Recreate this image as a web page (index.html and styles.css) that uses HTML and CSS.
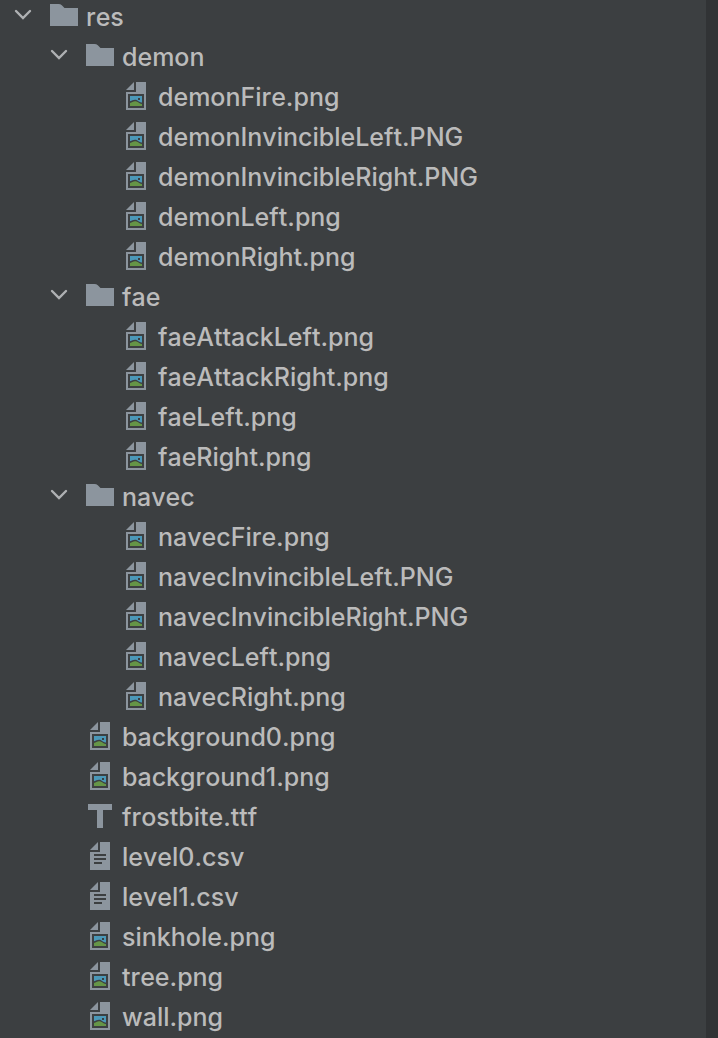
FILE: index.html
```html
<!DOCTYPE html>
<html lang="en">
<head>
<meta charset="utf-8">
<title>res</title>
<link rel="stylesheet" href="styles.css">
</head>
<body>
<svg class="sprite" aria-hidden="true">
  <symbol id="chevron" viewBox="0 0 32 32"><path d="M8 11l7 7 7-7" fill="none" stroke="#afb1b3" stroke-width="2.4" stroke-linecap="round"/></symbol>
  <symbol id="folder" viewBox="0 0 32 32"><path d="M2 4h8.500q2 0 3.300 1.300L16.500 8H30v18H2z" fill="#8c959e"/></symbol>
  <symbol id="image" viewBox="0 0 32 32">
    <path d="M14 2v8H6zM16 2h10v28H6V12h10zM8 14v14h16V14z" fill="#8c959e" fill-rule="evenodd"/>
    <path d="M10 16h12v6.500c-3 0-4-2.800-7-2.800-2 0-3 1-5 1.600z" fill="#4b98b8"/>
    <path d="M18 18h2v2h-2z" fill="#3c3f41"/>
    <path d="M10 23c2-.5 3-1.700 5-1.700 3 0 4 2.700 7 2.700v2H10z" fill="#659547"/>
  </symbol>
  <symbol id="text" viewBox="0 0 32 32"><path d="M14 2v8H6zM16 2h10v28H6V12h10zM10 14v2h12v-2zM10 18v2h12v-2zM10 22v2h8v-2z" fill="#8c959e" fill-rule="evenodd"/></symbol>
  <symbol id="font" viewBox="0 0 32 32"><path d="M4 4h24v6h-9v18h-6V10H4z" fill="#8c959e"/></symbol>
</svg>
<main class="panel">
  <ul class="tree">
    <li>
      <div class="row"><button class="toggle" aria-label="Toggle res" aria-expanded="true"><svg class="icon"><use href="#chevron"/></svg></button><svg class="icon"><use href="#folder"/></svg><span class="name">res</span></div>
      <ul class="branch">
        <li>
          <div class="row"><button class="toggle" aria-label="Toggle demon" aria-expanded="true"><svg class="icon"><use href="#chevron"/></svg></button><svg class="icon"><use href="#folder"/></svg><span class="name">demon</span></div>
          <ul class="branch">
            <li class="row file"><svg class="icon"><use href="#image"/></svg><span class="name">demonFire.png</span></li>
            <li class="row file"><svg class="icon"><use href="#image"/></svg><span class="name">demonInvincibleLeft.PNG</span></li>
            <li class="row file"><svg class="icon"><use href="#image"/></svg><span class="name">demonInvincibleRight.PNG</span></li>
            <li class="row file"><svg class="icon"><use href="#image"/></svg><span class="name">demonLeft.png</span></li>
            <li class="row file"><svg class="icon"><use href="#image"/></svg><span class="name">demonRight.png</span></li>
          </ul>
        </li>
        <li>
          <div class="row"><button class="toggle" aria-label="Toggle fae" aria-expanded="true"><svg class="icon"><use href="#chevron"/></svg></button><svg class="icon"><use href="#folder"/></svg><span class="name">fae</span></div>
          <ul class="branch">
            <li class="row file"><svg class="icon"><use href="#image"/></svg><span class="name">faeAttackLeft.png</span></li>
            <li class="row file"><svg class="icon"><use href="#image"/></svg><span class="name">faeAttackRight.png</span></li>
            <li class="row file"><svg class="icon"><use href="#image"/></svg><span class="name">faeLeft.png</span></li>
            <li class="row file"><svg class="icon"><use href="#image"/></svg><span class="name">faeRight.png</span></li>
          </ul>
        </li>
        <li>
          <div class="row"><button class="toggle" aria-label="Toggle navec" aria-expanded="true"><svg class="icon"><use href="#chevron"/></svg></button><svg class="icon"><use href="#folder"/></svg><span class="name">navec</span></div>
          <ul class="branch">
            <li class="row file"><svg class="icon"><use href="#image"/></svg><span class="name">navecFire.png</span></li>
            <li class="row file"><svg class="icon"><use href="#image"/></svg><span class="name">navecInvincibleLeft.PNG</span></li>
            <li class="row file"><svg class="icon"><use href="#image"/></svg><span class="name">navecInvincibleRight.PNG</span></li>
            <li class="row file"><svg class="icon"><use href="#image"/></svg><span class="name">navecLeft.png</span></li>
            <li class="row file"><svg class="icon"><use href="#image"/></svg><span class="name">navecRight.png</span></li>
          </ul>
        </li>
        <li class="row file"><svg class="icon"><use href="#image"/></svg><span class="name">background0.png</span></li>
        <li class="row file"><svg class="icon"><use href="#image"/></svg><span class="name">background1.png</span></li>
        <li class="row file"><svg class="icon"><use href="#font"/></svg><span class="name">frostbite.ttf</span></li>
        <li class="row file"><svg class="icon"><use href="#text"/></svg><span class="name">level0.csv</span></li>
        <li class="row file"><svg class="icon"><use href="#text"/></svg><span class="name">level1.csv</span></li>
        <li class="row file"><svg class="icon"><use href="#image"/></svg><span class="name">sinkhole.png</span></li>
        <li class="row file"><svg class="icon"><use href="#image"/></svg><span class="name">tree.png</span></li>
        <li class="row file"><svg class="icon"><use href="#image"/></svg><span class="name">wall.png</span></li>
      </ul>
    </li>
  </ul>
  <div class="gutter"></div>
</main>
<script src="tree.js"></script>
</body>
</html>
```
FILE: styles.css
```css
* {
  box-sizing: border-box;
}

body {
  margin: 0;
  background: #3c3f41;
  color: #bbbbbb;
  font: 500 25px/32px Inter, "Liberation Sans", sans-serif;
  font-kerning: none;
  font-variant-ligatures: none;
}

.sprite {
  display: none;
}

.panel {
  display: flex;
  min-height: 100vh;
}

.tree,
.branch {
  margin: 0;
  padding: 0;
  list-style: none;
}

.tree {
  flex: 1;
  min-width: 0;
  margin-top: -4px;
  padding-left: 8px;
}

.branch {
  padding-left: 36px;
}

.branch[hidden] {
  display: none;
}

.row {
  display: flex;
  align-items: center;
  height: 40px;
  white-space: nowrap;
}

.file {
  padding-left: 40px;
}

.toggle {
  display: flex;
  margin: 0 8px 0 0;
  padding: 0;
  border: 0;
  background: none;
  cursor: pointer;
}

.toggle[aria-expanded="false"] {
  transform: rotate(-90deg);
}

.icon {
  flex: none;
  width: 32px;
  height: 32px;
}

.name {
  padding: 2px 0 0 6px;
}

.gutter {
  flex: none;
  width: 12px;
  background: #313335;
}
```
FILE: tree.js
```js
document.querySelectorAll(".toggle").forEach((button) => {
  button.addEventListener("click", () => {
    const open = button.getAttribute("aria-expanded") === "true";
    button.setAttribute("aria-expanded", String(!open));
    button.parentElement.nextElementSibling.hidden = open;
  });
});
```
